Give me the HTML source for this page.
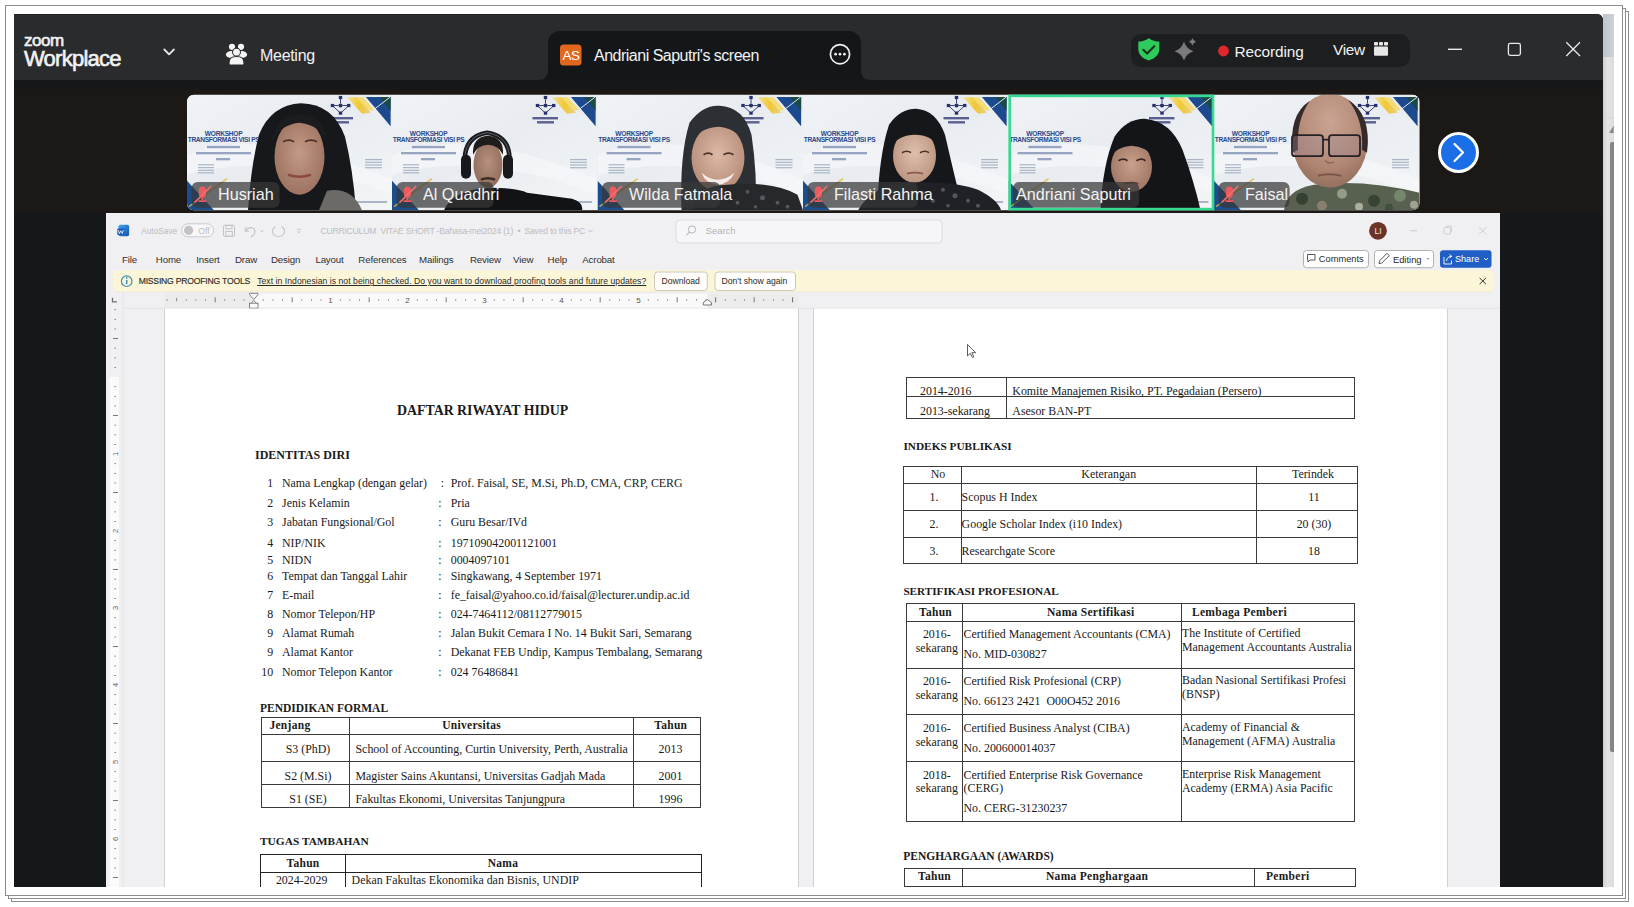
<!DOCTYPE html>
<html><head><meta charset="utf-8">
<style>
*{box-sizing:border-box;margin:0;padding:0}
html,body{width:1634px;height:907px;overflow:hidden;background:#fff;position:relative;font-family:"Liberation Sans",sans-serif}
.a{position:absolute}
.ln{position:absolute;background:#8c8c8c}
.t{position:absolute;white-space:nowrap;line-height:1}
/* title bar */
#zw{left:14px;top:14px;width:1589px;height:873px;background:#14181b;overflow:hidden;border-top-right-radius:6px}
#tb{left:0;top:0;width:1589px;height:66px;background:#2a2b2d}
.wt{color:#f2f2f2}
</style></head>
<body>
<!-- stacked paper borders -->
<div class="a" style="left:11px;top:11px;width:1618px;height:891px;border:1px solid #8c8c8c;background:#fff"></div>
<div class="a" style="left:8px;top:8px;width:1618px;height:891px;border:1px solid #8c8c8c;background:#fff"></div>
<div class="a" style="left:5px;top:5px;width:1618px;height:891px;border:1px solid #8c8c8c;background:#fff"></div>
<!-- right side strip (scrollbar of underlying window) -->
<div class="a" style="left:1603px;top:14px;width:11px;height:873px;background:linear-gradient(90deg,#d0d0d0,#e4e4e4 40%,#dcdcdc)"></div>
<div class="a" style="left:1603px;top:14px;width:11px;height:43px;background:linear-gradient(90deg,#bfc3ca,#cdd2d9)"></div>
<svg class="a" style="left:1603px;top:115px" width="11" height="20"><rect x="0" y="2.5" width="11" height="0.8" fill="#d6d6d6"/><path d="M6 18 L10.7 10.5 L10.7 18Z" fill="#8a8a8a"/></svg>
<div class="a" style="left:1610px;top:142px;width:4px;height:610px;background:#858585;border-radius:2px 0 0 2px"></div>

<!-- zoom window -->
<div class="a" style="left:14px;top:14px;width:1589px;height:873px;background:#14181b;border-top-right-radius:6px;overflow:hidden">
  <div class="a" style="left:0;top:0;width:1589px;height:66px;background:linear-gradient(180deg,#1f2022 0,#1f2022 1px,#2a2b2d 1.5px)"></div>
  <div class="a" style="left:0;top:73px;width:1589px;height:126px;background:linear-gradient(180deg,#14171a 0px,#1b1815 3px,#1b1815)"></div>
</div>
<!-- share tab -->
<div class="a" style="left:548px;top:31px;width:313px;height:49px;background:#14171a;border-radius:12px 12px 0 0"></div>
<svg class="a" style="left:0;top:0" width="1634" height="100" viewBox="0 0 1634 100">
  <path d="M538 80 Q548 80 548 70 L548 80 Z" fill="#14171a"/>
  <path d="M871 80 Q861 80 861 70 L861 80 Z" fill="#14171a"/>
  <!-- chevron -->
  <path d="M164.3 49.5 L169.1 54.3 L173.9 49.5" fill="none" stroke="#e8e8e8" stroke-width="1.8" stroke-linecap="round" stroke-linejoin="round"/>
  <!-- meeting icon -->
  <g fill="#f4f4f4">
    <circle cx="232" cy="46.8" r="3.1"/>
    <circle cx="241" cy="46.8" r="3.1"/>
    <ellipse cx="231.5" cy="54.5" rx="5.6" ry="3.6"/>
    <ellipse cx="241.5" cy="54.5" rx="5.6" ry="3.6"/>
    <circle cx="236.5" cy="52.2" r="4.4" fill="#2a2b2d"/>
    <circle cx="236.5" cy="52.2" r="3.4"/>
    <path d="M229 64 L229 62.5 Q229 56.5 236.5 56.5 Q244 56.5 244 62.5 L244 64 Q244 65 243 65 L230 65 Q229 65 229 64Z" stroke="#2a2b2d" stroke-width="1.2"/>
  </g>
  <!-- AS avatar -->
  <rect x="560" y="44.5" width="21.5" height="21" rx="3.5" fill="#e1661e"/>
  <!-- more circle -->
  <circle cx="840" cy="54.2" r="9.6" fill="none" stroke="#f0f0f0" stroke-width="1.7"/>
  <circle cx="835.6" cy="54.2" r="1.35" fill="#f0f0f0"/><circle cx="840" cy="54.2" r="1.35" fill="#f0f0f0"/><circle cx="844.4" cy="54.2" r="1.35" fill="#f0f0f0"/>
  <!-- pill -->
  <rect x="1131" y="34" width="279" height="33" rx="10" fill="#1d1e20"/>
  <!-- shield -->
  <path d="M1148.8 38.2 C1152 40.6 1155.5 41.6 1159.3 41.6 L1159.3 49 C1159.3 54.6 1155 58.6 1148.8 60.4 C1142.6 58.6 1138.3 54.6 1138.3 49 L1138.3 41.6 C1142.1 41.6 1145.6 40.6 1148.8 38.2Z" fill="#2fca5c"/>
  <path d="M1143.3 49.8 L1147.1 53.5 L1154.3 46.3" fill="none" stroke="#16321f" stroke-width="2.2" stroke-linecap="round" stroke-linejoin="round"/>
  <!-- sparkle -->
  <path d="M1184 41.5 Q1186.2 48.8 1193.5 51.2 Q1186.2 53.6 1184 60.5 Q1181.8 53.6 1174.5 51.2 Q1181.8 48.8 1184 41.5Z" fill="#7a7a7c"/>
  <path d="M1192.5 38 Q1193.3 40.9 1196 41.8 Q1193.3 42.7 1192.5 45.5 Q1191.7 42.7 1189 41.8 Q1191.7 40.9 1192.5 38Z" fill="#7a7a7c"/>
  <!-- rec dot -->
  <circle cx="1223.5" cy="51" r="5.4" fill="#e0282c"/>
  <!-- grid icon -->
  <g fill="#e6e6e6">
   <rect x="1374" y="42" width="4" height="3.6" rx="0.8"/><rect x="1379" y="42" width="4" height="3.6" rx="0.8"/><rect x="1384" y="42" width="4" height="3.6" rx="0.8"/>
   <rect x="1374" y="46.6" width="14" height="9.2" rx="1"/>
  </g>
  <!-- window controls -->
  <path d="M1448 49.3 H1462" stroke="#eaeaea" stroke-width="1.4"/>
  <rect x="1508.4" y="43.4" width="12" height="12" rx="1.8" fill="none" stroke="#eaeaea" stroke-width="1.3"/>
  <path d="M1566.3 42.3 L1580 56 M1580 42.3 L1566.3 56" stroke="#eaeaea" stroke-width="1.3"/>
</svg>
<!--STRIP-->
<svg class="a" style="left:0;top:0" width="1634" height="230" viewBox="0 0 1634 230">
<defs>
<linearGradient id="tbg" x1="0" y1="0" x2="1" y2="1">
 <stop offset="0" stop-color="#f0f3f6"/><stop offset="0.45" stop-color="#e8ecf0"/><stop offset="1" stop-color="#f3f5f7"/>
</linearGradient>
<radialGradient id="skin1" cx="0.5" cy="0.45" r="0.6"><stop offset="0" stop-color="#c39a85"/><stop offset="1" stop-color="#9a6f5e"/></radialGradient>
<radialGradient id="skin2" cx="0.5" cy="0.45" r="0.6"><stop offset="0" stop-color="#b8917e"/><stop offset="1" stop-color="#8d6a59"/></radialGradient>
<radialGradient id="skin3" cx="0.5" cy="0.45" r="0.6"><stop offset="0" stop-color="#dcb9a6"/><stop offset="1" stop-color="#b48a76"/></radialGradient>
<radialGradient id="skin4" cx="0.5" cy="0.45" r="0.6"><stop offset="0" stop-color="#dfc0ad"/><stop offset="1" stop-color="#b8927e"/></radialGradient>
<radialGradient id="skin5" cx="0.5" cy="0.45" r="0.6"><stop offset="0" stop-color="#c9a08b"/><stop offset="1" stop-color="#9c7462"/></radialGradient>
<radialGradient id="skin6" cx="0.5" cy="0.3" r="0.7"><stop offset="0" stop-color="#caa593"/><stop offset="0.7" stop-color="#b08672"/><stop offset="1" stop-color="#94705e"/></radialGradient>
<linearGradient id="ylw" x1="0" y1="0" x2="1" y2="0"><stop offset="0" stop-color="#f3d24a" stop-opacity="0.5"/><stop offset="0.5" stop-color="#f2c830"/><stop offset="1" stop-color="#e9c040" stop-opacity="0.6"/></linearGradient>
<clipPath id="stripclip"><rect x="187" y="94.7" width="1232.5" height="115.5" rx="7"/></clipPath>
<clipPath id="tclip"><rect x="0" y="0" width="205.5" height="115.5"/></clipPath>


</defs>
<rect x="187" y="94.7" width="1232.5" height="115.5" rx="7" fill="#e8ecf0"/>
<g clip-path="url(#stripclip)">
<g transform="translate(187,94.7)" clip-path="url(#tclip)">

 <rect x="0" y="0" width="205.5" height="115.5" fill="url(#tbg)"/>
 <path d="M0 60 Q80 30 205.5 85 L205.5 100 Q90 55 0 80Z" fill="#f5f7f9" opacity="0.7"/>
 <path d="M160 2.5 L170 2.5 L184 18 L175 19Z" fill="url(#ylw)"/>
 <path d="M168 2.5 L176 2.5 L187 15 L182 16Z" fill="#f5d85a" opacity="0.8"/>
 <path d="M178.9 2.2 L203.6 2.2 L203.6 31.6Z" fill="#1d4a8f"/>
 <path d="M192 2.2 L203.6 2.2 L203.6 16Z" fill="#1c4a3c" opacity="0.9"/>
 <path d="M184.6 16.6 L203 2.5" stroke="#dfe8f0" stroke-width="1"/>
 <g fill="#27306e">
  <rect x="151.8" y="1.2" width="3.4" height="3.2"/>
  <rect x="143.8" y="9.2" width="3.4" height="3.2"/><rect x="160" y="9.2" width="3.4" height="3.2"/>
  <rect x="151.8" y="16.8" width="3.4" height="3.2"/>
  <circle cx="153.5" cy="10.8" r="2.1"/>
  <path d="M153.5 4.4 V8.6 M145.5 11 L153.5 18.5 L161.7 11 M147.2 10.8 H151.3 M155.7 10.8 H160" stroke="#27306e" stroke-width="0.9" fill="none"/>
 </g>
 <rect x="140.5" y="22.3" width="25.5" height="2.4" fill="#2a3170" opacity="0.75"/>
 <rect x="145" y="26.4" width="17" height="2.4" fill="#2a3170" opacity="0.75"/>
 <text x="36.7" y="41.2" font-family="Liberation Sans" font-weight="bold" font-size="6.6" fill="#2a4a8a" text-anchor="middle" textLength="37.8">WORKSHOP</text>
 <text x="36.7" y="47.8" font-family="Liberation Sans" font-weight="bold" font-size="6.6" fill="#2a4a8a" text-anchor="middle" textLength="72">TRANSFORMASI VISI PS</text>
 <rect x="20" y="51.2" width="33" height="2.3" fill="#3b5690" opacity="0.5"/>
 <rect x="9" y="57.3" width="55" height="2.3" fill="#3b5690" opacity="0.5"/>
 <rect x="29" y="63.3" width="14" height="2.3" fill="#3b5690" opacity="0.5"/>
 <g fill="#9aa8bb" opacity="0.8">
  <rect x="11" y="69.5" width="16" height="1.2"/><rect x="11" y="72.3" width="16" height="1.2"/><rect x="11" y="75" width="16" height="1.2"/><rect x="11" y="77.5" width="16" height="1.2"/>
  <rect x="178" y="64.3" width="17" height="1.2"/><rect x="178" y="67" width="17" height="1.2"/><rect x="178" y="69.7" width="17" height="1.2"/><rect x="178" y="72.4" width="17" height="1.2"/>
 </g>
 <rect x="158" y="106.3" width="42" height="2" fill="#2a3f6f" opacity="0.35"/>
 <path d="M0 86 L0 115.5 L27 115.5Z" fill="#1c4d8c"/>
 <path d="M2 112 L40 84" stroke="#e0b93a" stroke-width="1.5" opacity="0.8"/>
<path d="M61 115.5 Q64 70 72 40 Q84 10 114 8.5 Q146 9 158 42 Q166 75 169 115.5Z" fill="#17181b"/>
    <ellipse cx="112.5" cy="62" rx="25" ry="38" fill="url(#skin1)"/>
    <path d="M84 50 Q88 20 112 19 Q138 20 141 50 Q134 30 112 28 Q92 30 84 50Z" fill="#1b1c1f"/>
    <path d="M96 47 Q102 44 107 47 M118 47 Q124 44 130 47" stroke="#4a3028" stroke-width="1.8" fill="none"/>
    <path d="M101 80 Q112 84 124 80" stroke="#8a4a42" stroke-width="2.6" fill="none"/>
    <path d="M140 96 Q165 92 175 115.5 L132 115.5Z" fill="#6b6a66"/>
<rect x="4.6" y="87.3" width="88" height="25.7" rx="6" fill="#383838" opacity="0.72"/>
<g transform="translate(11.9,91.6)">
 <path d="M3.5 0.3 Q7 0.3 7 4 L7 8 Q7 11.3 3.5 11.3 Q0 11.3 0 8 L0 4 Q0 0.3 3.5 0.3Z" fill="#ee5a5e"/>
 <path d="M2.5 11 H4.5 V14.2 H2.5Z" fill="#ee5a5e"/>
 <rect x="-0.5" y="14" width="8" height="1.6" rx="0.6" fill="#ee5a5e"/>
 <path d="M-4.3 16.2 L12.3 -0.3" stroke="#f07070" stroke-width="1.6"/></g>
</g>
<g transform="translate(392,94.7)" clip-path="url(#tclip)">

 <rect x="0" y="0" width="205.5" height="115.5" fill="url(#tbg)"/>
 <path d="M0 60 Q80 30 205.5 85 L205.5 100 Q90 55 0 80Z" fill="#f5f7f9" opacity="0.7"/>
 <path d="M160 2.5 L170 2.5 L184 18 L175 19Z" fill="url(#ylw)"/>
 <path d="M168 2.5 L176 2.5 L187 15 L182 16Z" fill="#f5d85a" opacity="0.8"/>
 <path d="M178.9 2.2 L203.6 2.2 L203.6 31.6Z" fill="#1d4a8f"/>
 <path d="M192 2.2 L203.6 2.2 L203.6 16Z" fill="#1c4a3c" opacity="0.9"/>
 <path d="M184.6 16.6 L203 2.5" stroke="#dfe8f0" stroke-width="1"/>
 <g fill="#27306e">
  <rect x="151.8" y="1.2" width="3.4" height="3.2"/>
  <rect x="143.8" y="9.2" width="3.4" height="3.2"/><rect x="160" y="9.2" width="3.4" height="3.2"/>
  <rect x="151.8" y="16.8" width="3.4" height="3.2"/>
  <circle cx="153.5" cy="10.8" r="2.1"/>
  <path d="M153.5 4.4 V8.6 M145.5 11 L153.5 18.5 L161.7 11 M147.2 10.8 H151.3 M155.7 10.8 H160" stroke="#27306e" stroke-width="0.9" fill="none"/>
 </g>
 <rect x="140.5" y="22.3" width="25.5" height="2.4" fill="#2a3170" opacity="0.75"/>
 <rect x="145" y="26.4" width="17" height="2.4" fill="#2a3170" opacity="0.75"/>
 <text x="36.7" y="41.2" font-family="Liberation Sans" font-weight="bold" font-size="6.6" fill="#2a4a8a" text-anchor="middle" textLength="37.8">WORKSHOP</text>
 <text x="36.7" y="47.8" font-family="Liberation Sans" font-weight="bold" font-size="6.6" fill="#2a4a8a" text-anchor="middle" textLength="72">TRANSFORMASI VISI PS</text>
 <rect x="20" y="51.2" width="33" height="2.3" fill="#3b5690" opacity="0.5"/>
 <rect x="9" y="57.3" width="55" height="2.3" fill="#3b5690" opacity="0.5"/>
 <rect x="29" y="63.3" width="14" height="2.3" fill="#3b5690" opacity="0.5"/>
 <g fill="#9aa8bb" opacity="0.8">
  <rect x="11" y="69.5" width="16" height="1.2"/><rect x="11" y="72.3" width="16" height="1.2"/><rect x="11" y="75" width="16" height="1.2"/><rect x="11" y="77.5" width="16" height="1.2"/>
  <rect x="178" y="64.3" width="17" height="1.2"/><rect x="178" y="67" width="17" height="1.2"/><rect x="178" y="69.7" width="17" height="1.2"/><rect x="178" y="72.4" width="17" height="1.2"/>
 </g>
 <rect x="158" y="106.3" width="42" height="2" fill="#2a3f6f" opacity="0.35"/>
 <path d="M0 86 L0 115.5 L27 115.5Z" fill="#1c4d8c"/>
 <path d="M2 112 L40 84" stroke="#e0b93a" stroke-width="1.5" opacity="0.8"/>
<path d="M52 115.5 Q60 96 95 93 Q125 93 135 98 L180 104 Q192 108 190 115.5Z" fill="#121316"/>
    <ellipse cx="96" cy="70" rx="14.5" ry="23" fill="url(#skin2)"/>
    <path d="M81 60 Q80 42 96 41 Q112 42 111 60 Q106 50 96 50 Q86 50 81 60Z" fill="#1f1c1b"/>
    <path d="M73 72 Q70 42 95 38 Q121 42 117 72" fill="none" stroke="#1a1b1f" stroke-width="4.5"/>
    <path d="M73 72 Q70 42 95 38 Q121 42 117 72" fill="none" stroke="#8a8c92" stroke-width="1" opacity="0.6"/>
    <rect x="69" y="60" width="10" height="24" rx="5" fill="#18191d"/>
    <rect x="111" y="60" width="10" height="24" rx="5" fill="#18191d"/>
    <path d="M89 85 Q96 82 103 85" stroke="#3a2b24" stroke-width="2.4" fill="none"/>
<rect x="4.6" y="87.3" width="97" height="25.7" rx="6" fill="#383838" opacity="0.72"/>
<g transform="translate(11.9,91.6)">
 <path d="M3.5 0.3 Q7 0.3 7 4 L7 8 Q7 11.3 3.5 11.3 Q0 11.3 0 8 L0 4 Q0 0.3 3.5 0.3Z" fill="#ee5a5e"/>
 <path d="M2.5 11 H4.5 V14.2 H2.5Z" fill="#ee5a5e"/>
 <rect x="-0.5" y="14" width="8" height="1.6" rx="0.6" fill="#ee5a5e"/>
 <path d="M-4.3 16.2 L12.3 -0.3" stroke="#f07070" stroke-width="1.6"/></g>
</g>
<g transform="translate(597.5,94.7)" clip-path="url(#tclip)">

 <rect x="0" y="0" width="205.5" height="115.5" fill="url(#tbg)"/>
 <path d="M0 60 Q80 30 205.5 85 L205.5 100 Q90 55 0 80Z" fill="#f5f7f9" opacity="0.7"/>
 <path d="M160 2.5 L170 2.5 L184 18 L175 19Z" fill="url(#ylw)"/>
 <path d="M168 2.5 L176 2.5 L187 15 L182 16Z" fill="#f5d85a" opacity="0.8"/>
 <path d="M178.9 2.2 L203.6 2.2 L203.6 31.6Z" fill="#1d4a8f"/>
 <path d="M192 2.2 L203.6 2.2 L203.6 16Z" fill="#1c4a3c" opacity="0.9"/>
 <path d="M184.6 16.6 L203 2.5" stroke="#dfe8f0" stroke-width="1"/>
 <g fill="#27306e">
  <rect x="151.8" y="1.2" width="3.4" height="3.2"/>
  <rect x="143.8" y="9.2" width="3.4" height="3.2"/><rect x="160" y="9.2" width="3.4" height="3.2"/>
  <rect x="151.8" y="16.8" width="3.4" height="3.2"/>
  <circle cx="153.5" cy="10.8" r="2.1"/>
  <path d="M153.5 4.4 V8.6 M145.5 11 L153.5 18.5 L161.7 11 M147.2 10.8 H151.3 M155.7 10.8 H160" stroke="#27306e" stroke-width="0.9" fill="none"/>
 </g>
 <rect x="140.5" y="22.3" width="25.5" height="2.4" fill="#2a3170" opacity="0.75"/>
 <rect x="145" y="26.4" width="17" height="2.4" fill="#2a3170" opacity="0.75"/>
 <text x="36.7" y="41.2" font-family="Liberation Sans" font-weight="bold" font-size="6.6" fill="#2a4a8a" text-anchor="middle" textLength="37.8">WORKSHOP</text>
 <text x="36.7" y="47.8" font-family="Liberation Sans" font-weight="bold" font-size="6.6" fill="#2a4a8a" text-anchor="middle" textLength="72">TRANSFORMASI VISI PS</text>
 <rect x="20" y="51.2" width="33" height="2.3" fill="#3b5690" opacity="0.5"/>
 <rect x="9" y="57.3" width="55" height="2.3" fill="#3b5690" opacity="0.5"/>
 <rect x="29" y="63.3" width="14" height="2.3" fill="#3b5690" opacity="0.5"/>
 <g fill="#9aa8bb" opacity="0.8">
  <rect x="11" y="69.5" width="16" height="1.2"/><rect x="11" y="72.3" width="16" height="1.2"/><rect x="11" y="75" width="16" height="1.2"/><rect x="11" y="77.5" width="16" height="1.2"/>
  <rect x="178" y="64.3" width="17" height="1.2"/><rect x="178" y="67" width="17" height="1.2"/><rect x="178" y="69.7" width="17" height="1.2"/><rect x="178" y="72.4" width="17" height="1.2"/>
 </g>
 <rect x="158" y="106.3" width="42" height="2" fill="#2a3f6f" opacity="0.35"/>
 <path d="M0 86 L0 115.5 L27 115.5Z" fill="#1c4d8c"/>
 <path d="M2 112 L40 84" stroke="#e0b93a" stroke-width="1.5" opacity="0.8"/>
<path d="M84 115.5 Q82 60 92 28 Q105 10 122 11 Q146 12 154 40 Q160 80 158 115.5Z" fill="#2c2f34"/>
    <ellipse cx="120.5" cy="63" rx="26.5" ry="34" fill="url(#skin3)"/>
    <path d="M94 46 Q98 24 121 24 Q143 25 147 48 Q138 33 121 32 Q103 33 94 46Z" fill="#2c2f34"/>
    <path d="M104 78 Q120 92 137 78 Q132 89 120 90 Q108 89 104 78Z" fill="#f4ece8"/>
    <path d="M106 60 Q111 57 115 60 M126 60 Q131 57 136 60" stroke="#4a3028" stroke-width="1.8" fill="none"/>
    <path d="M95 115.5 Q100 90 130 90 Q175 86 200 100 L205.5 115.5Z" fill="#26282c"/>
    <g fill="#7a7c80" opacity="0.55"><circle cx="150" cy="97" r="2"/><circle cx="165" cy="103" r="2.5"/><circle cx="180" cy="108" r="2"/><circle cx="140" cy="108" r="2"/><circle cx="158" cy="112" r="1.8"/><circle cx="190" cy="112" r="2"/></g>
<rect x="4.6" y="87.3" width="118" height="25.7" rx="6" fill="#383838" opacity="0.72"/>
<g transform="translate(11.9,91.6)">
 <path d="M3.5 0.3 Q7 0.3 7 4 L7 8 Q7 11.3 3.5 11.3 Q0 11.3 0 8 L0 4 Q0 0.3 3.5 0.3Z" fill="#ee5a5e"/>
 <path d="M2.5 11 H4.5 V14.2 H2.5Z" fill="#ee5a5e"/>
 <rect x="-0.5" y="14" width="8" height="1.6" rx="0.6" fill="#ee5a5e"/>
 <path d="M-4.3 16.2 L12.3 -0.3" stroke="#f07070" stroke-width="1.6"/></g>
</g>
<g transform="translate(803,94.7)" clip-path="url(#tclip)">

 <rect x="0" y="0" width="205.5" height="115.5" fill="url(#tbg)"/>
 <path d="M0 60 Q80 30 205.5 85 L205.5 100 Q90 55 0 80Z" fill="#f5f7f9" opacity="0.7"/>
 <path d="M160 2.5 L170 2.5 L184 18 L175 19Z" fill="url(#ylw)"/>
 <path d="M168 2.5 L176 2.5 L187 15 L182 16Z" fill="#f5d85a" opacity="0.8"/>
 <path d="M178.9 2.2 L203.6 2.2 L203.6 31.6Z" fill="#1d4a8f"/>
 <path d="M192 2.2 L203.6 2.2 L203.6 16Z" fill="#1c4a3c" opacity="0.9"/>
 <path d="M184.6 16.6 L203 2.5" stroke="#dfe8f0" stroke-width="1"/>
 <g fill="#27306e">
  <rect x="151.8" y="1.2" width="3.4" height="3.2"/>
  <rect x="143.8" y="9.2" width="3.4" height="3.2"/><rect x="160" y="9.2" width="3.4" height="3.2"/>
  <rect x="151.8" y="16.8" width="3.4" height="3.2"/>
  <circle cx="153.5" cy="10.8" r="2.1"/>
  <path d="M153.5 4.4 V8.6 M145.5 11 L153.5 18.5 L161.7 11 M147.2 10.8 H151.3 M155.7 10.8 H160" stroke="#27306e" stroke-width="0.9" fill="none"/>
 </g>
 <rect x="140.5" y="22.3" width="25.5" height="2.4" fill="#2a3170" opacity="0.75"/>
 <rect x="145" y="26.4" width="17" height="2.4" fill="#2a3170" opacity="0.75"/>
 <text x="36.7" y="41.2" font-family="Liberation Sans" font-weight="bold" font-size="6.6" fill="#2a4a8a" text-anchor="middle" textLength="37.8">WORKSHOP</text>
 <text x="36.7" y="47.8" font-family="Liberation Sans" font-weight="bold" font-size="6.6" fill="#2a4a8a" text-anchor="middle" textLength="72">TRANSFORMASI VISI PS</text>
 <rect x="20" y="51.2" width="33" height="2.3" fill="#3b5690" opacity="0.5"/>
 <rect x="9" y="57.3" width="55" height="2.3" fill="#3b5690" opacity="0.5"/>
 <rect x="29" y="63.3" width="14" height="2.3" fill="#3b5690" opacity="0.5"/>
 <g fill="#9aa8bb" opacity="0.8">
  <rect x="11" y="69.5" width="16" height="1.2"/><rect x="11" y="72.3" width="16" height="1.2"/><rect x="11" y="75" width="16" height="1.2"/><rect x="11" y="77.5" width="16" height="1.2"/>
  <rect x="178" y="64.3" width="17" height="1.2"/><rect x="178" y="67" width="17" height="1.2"/><rect x="178" y="69.7" width="17" height="1.2"/><rect x="178" y="72.4" width="17" height="1.2"/>
 </g>
 <rect x="158" y="106.3" width="42" height="2" fill="#2a3f6f" opacity="0.35"/>
 <path d="M0 86 L0 115.5 L27 115.5Z" fill="#1c4d8c"/>
 <path d="M2 112 L40 84" stroke="#e0b93a" stroke-width="1.5" opacity="0.8"/>
<path d="M74 115.5 Q76 60 86 30 Q97 14 113 14 Q133 15 142 40 Q150 75 160 115.5Z" fill="#16171b"/>
    <ellipse cx="111.5" cy="61" rx="21.5" ry="27" fill="url(#skin4)"/>
    <path d="M88 52 Q90 33 112 33 Q134 34 136 52 Q128 40 112 40 Q96 40 88 52Z" fill="#16171b"/>
    <path d="M99 58 Q104 55 108 58 M117 58 Q122 55 126 58" stroke="#4a3028" stroke-width="1.6" fill="none"/>
    <path d="M104 79 Q112 77 120 79" stroke="#8e5a50" stroke-width="1.8" fill="none"/>
    <path d="M55 115.5 Q70 90 105 88 Q150 86 175 95 Q195 105 198 115.5Z" fill="#1f2126"/>
    <g fill="#8a8c90" opacity="0.5"><circle cx="140" cy="95" r="2"/><circle cx="152" cy="101" r="2.5"/><circle cx="165" cy="106" r="2"/><circle cx="130" cy="106" r="2"/><circle cx="145" cy="111" r="1.8"/><circle cx="175" cy="111" r="2"/><circle cx="120" cy="98" r="1.6"/></g>
<rect x="4.6" y="87.3" width="110" height="25.7" rx="6" fill="#383838" opacity="0.72"/>
<g transform="translate(11.9,91.6)">
 <path d="M3.5 0.3 Q7 0.3 7 4 L7 8 Q7 11.3 3.5 11.3 Q0 11.3 0 8 L0 4 Q0 0.3 3.5 0.3Z" fill="#ee5a5e"/>
 <path d="M2.5 11 H4.5 V14.2 H2.5Z" fill="#ee5a5e"/>
 <rect x="-0.5" y="14" width="8" height="1.6" rx="0.6" fill="#ee5a5e"/>
 <path d="M-4.3 16.2 L12.3 -0.3" stroke="#f07070" stroke-width="1.6"/></g>
</g>
<g transform="translate(1008.5,94.7)" clip-path="url(#tclip)">

 <rect x="0" y="0" width="205.5" height="115.5" fill="url(#tbg)"/>
 <path d="M0 60 Q80 30 205.5 85 L205.5 100 Q90 55 0 80Z" fill="#f5f7f9" opacity="0.7"/>
 <path d="M160 2.5 L170 2.5 L184 18 L175 19Z" fill="url(#ylw)"/>
 <path d="M168 2.5 L176 2.5 L187 15 L182 16Z" fill="#f5d85a" opacity="0.8"/>
 <path d="M178.9 2.2 L203.6 2.2 L203.6 31.6Z" fill="#1d4a8f"/>
 <path d="M192 2.2 L203.6 2.2 L203.6 16Z" fill="#1c4a3c" opacity="0.9"/>
 <path d="M184.6 16.6 L203 2.5" stroke="#dfe8f0" stroke-width="1"/>
 <g fill="#27306e">
  <rect x="151.8" y="1.2" width="3.4" height="3.2"/>
  <rect x="143.8" y="9.2" width="3.4" height="3.2"/><rect x="160" y="9.2" width="3.4" height="3.2"/>
  <rect x="151.8" y="16.8" width="3.4" height="3.2"/>
  <circle cx="153.5" cy="10.8" r="2.1"/>
  <path d="M153.5 4.4 V8.6 M145.5 11 L153.5 18.5 L161.7 11 M147.2 10.8 H151.3 M155.7 10.8 H160" stroke="#27306e" stroke-width="0.9" fill="none"/>
 </g>
 <rect x="140.5" y="22.3" width="25.5" height="2.4" fill="#2a3170" opacity="0.75"/>
 <rect x="145" y="26.4" width="17" height="2.4" fill="#2a3170" opacity="0.75"/>
 <text x="36.7" y="41.2" font-family="Liberation Sans" font-weight="bold" font-size="6.6" fill="#2a4a8a" text-anchor="middle" textLength="37.8">WORKSHOP</text>
 <text x="36.7" y="47.8" font-family="Liberation Sans" font-weight="bold" font-size="6.6" fill="#2a4a8a" text-anchor="middle" textLength="72">TRANSFORMASI VISI PS</text>
 <rect x="20" y="51.2" width="33" height="2.3" fill="#3b5690" opacity="0.5"/>
 <rect x="9" y="57.3" width="55" height="2.3" fill="#3b5690" opacity="0.5"/>
 <rect x="29" y="63.3" width="14" height="2.3" fill="#3b5690" opacity="0.5"/>
 <g fill="#9aa8bb" opacity="0.8">
  <rect x="11" y="69.5" width="16" height="1.2"/><rect x="11" y="72.3" width="16" height="1.2"/><rect x="11" y="75" width="16" height="1.2"/><rect x="11" y="77.5" width="16" height="1.2"/>
  <rect x="178" y="64.3" width="17" height="1.2"/><rect x="178" y="67" width="17" height="1.2"/><rect x="178" y="69.7" width="17" height="1.2"/><rect x="178" y="72.4" width="17" height="1.2"/>
 </g>
 <rect x="158" y="106.3" width="42" height="2" fill="#2a3f6f" opacity="0.35"/>
 <path d="M0 86 L0 115.5 L27 115.5Z" fill="#1c4d8c"/>
 <path d="M2 112 L40 84" stroke="#e0b93a" stroke-width="1.5" opacity="0.8"/>
<path d="M92 115.5 Q94 70 106 42 Q118 24 136 24 Q162 26 174 55 Q186 88 192 115.5Z" fill="#141519"/>
    <ellipse cx="123" cy="72" rx="20.5" ry="25" fill="url(#skin5)"/>
    <path d="M101 62 Q104 44 123 43 Q143 44 146 62 Q137 52 123 51 Q109 52 101 62Z" fill="#141519"/>
    <path d="M110 66 Q115 63 119 66 M128 66 Q133 63 137 66" stroke="#3a2420" stroke-width="1.8" fill="none"/>
    <path d="M116 89 Q123 87 130 89" stroke="#6e4a40" stroke-width="1.8" fill="none"/>
<rect x="4.6" y="87.3" width="126" height="25.7" rx="6" fill="#383838" opacity="0.72"/>
</g>
<g transform="translate(1214,94.7)" clip-path="url(#tclip)">

 <rect x="0" y="0" width="205.5" height="115.5" fill="url(#tbg)"/>
 <path d="M0 60 Q80 30 205.5 85 L205.5 100 Q90 55 0 80Z" fill="#f5f7f9" opacity="0.7"/>
 <path d="M160 2.5 L170 2.5 L184 18 L175 19Z" fill="url(#ylw)"/>
 <path d="M168 2.5 L176 2.5 L187 15 L182 16Z" fill="#f5d85a" opacity="0.8"/>
 <path d="M178.9 2.2 L203.6 2.2 L203.6 31.6Z" fill="#1d4a8f"/>
 <path d="M192 2.2 L203.6 2.2 L203.6 16Z" fill="#1c4a3c" opacity="0.9"/>
 <path d="M184.6 16.6 L203 2.5" stroke="#dfe8f0" stroke-width="1"/>
 <g fill="#27306e">
  <rect x="151.8" y="1.2" width="3.4" height="3.2"/>
  <rect x="143.8" y="9.2" width="3.4" height="3.2"/><rect x="160" y="9.2" width="3.4" height="3.2"/>
  <rect x="151.8" y="16.8" width="3.4" height="3.2"/>
  <circle cx="153.5" cy="10.8" r="2.1"/>
  <path d="M153.5 4.4 V8.6 M145.5 11 L153.5 18.5 L161.7 11 M147.2 10.8 H151.3 M155.7 10.8 H160" stroke="#27306e" stroke-width="0.9" fill="none"/>
 </g>
 <rect x="140.5" y="22.3" width="25.5" height="2.4" fill="#2a3170" opacity="0.75"/>
 <rect x="145" y="26.4" width="17" height="2.4" fill="#2a3170" opacity="0.75"/>
 <text x="36.7" y="41.2" font-family="Liberation Sans" font-weight="bold" font-size="6.6" fill="#2a4a8a" text-anchor="middle" textLength="37.8">WORKSHOP</text>
 <text x="36.7" y="47.8" font-family="Liberation Sans" font-weight="bold" font-size="6.6" fill="#2a4a8a" text-anchor="middle" textLength="72">TRANSFORMASI VISI PS</text>
 <rect x="20" y="51.2" width="33" height="2.3" fill="#3b5690" opacity="0.5"/>
 <rect x="9" y="57.3" width="55" height="2.3" fill="#3b5690" opacity="0.5"/>
 <rect x="29" y="63.3" width="14" height="2.3" fill="#3b5690" opacity="0.5"/>
 <g fill="#9aa8bb" opacity="0.8">
  <rect x="11" y="69.5" width="16" height="1.2"/><rect x="11" y="72.3" width="16" height="1.2"/><rect x="11" y="75" width="16" height="1.2"/><rect x="11" y="77.5" width="16" height="1.2"/>
  <rect x="178" y="64.3" width="17" height="1.2"/><rect x="178" y="67" width="17" height="1.2"/><rect x="178" y="69.7" width="17" height="1.2"/><rect x="178" y="72.4" width="17" height="1.2"/>
 </g>
 <rect x="158" y="106.3" width="42" height="2" fill="#2a3f6f" opacity="0.35"/>
 <path d="M0 86 L0 115.5 L27 115.5Z" fill="#1c4d8c"/>
 <path d="M2 112 L40 84" stroke="#e0b93a" stroke-width="1.5" opacity="0.8"/>
<path d="M70 115.5 Q72 95 100 90 Q150 84 205.5 98 L205.5 115.5Z" fill="#59604f"/>
    <g opacity="0.75"><circle cx="88" cy="104" r="6" fill="#2a3428"/><circle cx="128" cy="99" r="5" fill="#a8ae98"/><circle cx="160" cy="106" r="6" fill="#2c3a2c"/><circle cx="186" cy="101" r="6" fill="#7f9474"/><circle cx="108" cy="111" r="5" fill="#9a8a7a"/><circle cx="145" cy="112" r="4" fill="#c8c8b8"/><circle cx="175" cy="113" r="4" fill="#3a4a38"/><circle cx="200" cy="110" r="4" fill="#b8b8a8"/></g>
    <ellipse cx="116" cy="46" rx="37.5" ry="47" fill="url(#skin6)"/>
    <path d="M79 58 Q74 20 96 6 Q82 25 84 55Z" fill="#35292a"/>
    <path d="M153 58 Q158 20 134 5 Q150 25 148 55Z" fill="#35292a"/>
    <rect x="78" y="40.5" width="31" height="21" rx="3" fill="#9e8a98" fill-opacity="0.35" stroke="#262226" stroke-width="1.8"/>
    <rect x="115" y="40.5" width="31" height="21" rx="3" fill="#9e8a98" fill-opacity="0.35" stroke="#262226" stroke-width="1.8"/>
    <path d="M109 45 H115" stroke="#262226" stroke-width="1.8"/>
    <path d="M104 81 Q115 78 127 81" stroke="#7a5448" stroke-width="2" fill="none"/>
    <path d="M111 66 Q115 70 120 67" stroke="#8a6452" stroke-width="1.3" fill="none"/>
<rect x="4.6" y="87.3" width="71" height="25.7" rx="6" fill="#383838" opacity="0.72"/>
<g transform="translate(11.9,91.6)">
 <path d="M3.5 0.3 Q7 0.3 7 4 L7 8 Q7 11.3 3.5 11.3 Q0 11.3 0 8 L0 4 Q0 0.3 3.5 0.3Z" fill="#ee5a5e"/>
 <path d="M2.5 11 H4.5 V14.2 H2.5Z" fill="#ee5a5e"/>
 <rect x="-0.5" y="14" width="8" height="1.6" rx="0.6" fill="#ee5a5e"/>
 <path d="M-4.3 16.2 L12.3 -0.3" stroke="#f07070" stroke-width="1.6"/></g>
</g>
</g>
<rect x="1009.7" y="95.9" width="203.3" height="113.2" fill="none" stroke="#35d98f" stroke-width="2.6"/>
<circle cx="1458.5" cy="152.5" r="19" fill="#1a6ee8" stroke="#fff" stroke-width="3"/>
<path d="M1454.5 144 L1463 152.5 L1454.5 161" fill="none" stroke="#fff" stroke-width="2.2" stroke-linecap="round" stroke-linejoin="round"/>
</svg>
<div class="t" style="left:217.5px;top:186.4px;font-size:17px;color:#f4f4f4;transform:scaleX(0.95);transform-origin:0 0">Husriah</div>
<div class="t" style="left:422.5px;top:186.4px;font-size:17px;color:#f4f4f4;transform:scaleX(0.95);transform-origin:0 0">Al Quadhri</div>
<div class="t" style="left:628.5px;top:186.4px;font-size:17px;color:#f4f4f4;transform:scaleX(0.95);transform-origin:0 0">Wilda Fatmala</div>
<div class="t" style="left:833.8px;top:186.4px;font-size:17px;color:#f4f4f4;transform:scaleX(0.95);transform-origin:0 0">Filasti Rahma</div>
<div class="t" style="left:1016.3px;top:186.4px;font-size:17px;color:#f4f4f4;transform:scaleX(0.95);transform-origin:0 0">Andriani Saputri</div>
<div class="t" style="left:1245.2px;top:186.4px;font-size:17px;color:#f4f4f4;transform:scaleX(0.95);transform-origin:0 0">Faisal</div>
<!--/STRIP-->
<div class="t wt" style="left:24px;top:31.5px;font-size:17px;letter-spacing:-0.5px;-webkit-text-stroke:0.6px #f2f2f2">zoom</div>
<div class="t wt" style="left:24px;top:47.5px;font-size:22px;letter-spacing:-0.75px;-webkit-text-stroke:0.6px #f2f2f2">Workplace</div>
<div class="t wt" style="left:260px;top:47.5px;font-size:16px;letter-spacing:-0.3px">Meeting</div>
<div class="t" style="left:562.5px;top:48.5px;font-size:13.5px;color:#fff;letter-spacing:-0.4px">AS</div>
<div class="t wt" style="left:594px;top:47.5px;font-size:16px;letter-spacing:-0.5px">Andriani Saputri's screen</div>
<div class="t wt" style="left:1234.5px;top:43.5px;font-size:15.4px;letter-spacing:-0.1px">Recording</div>
<div class="t wt" style="left:1333px;top:41.5px;font-size:15.4px;letter-spacing:-0.3px">View</div>
<!--WORD-->
<div class="a" style="left:106px;top:213px;width:1394px;height:674px;background:#f0eff2"></div>
<svg class="a" style="left:0;top:0" width="1634" height="907" viewBox="0 0 1634 907">
<defs><linearGradient id="wg" x1="0" y1="0" x2="1" y2="1"><stop offset="0" stop-color="#41a5ee"/><stop offset="0.5" stop-color="#2b7cd3"/><stop offset="1" stop-color="#1651a8"/></linearGradient></defs>
<rect x="118.5" y="224.7" width="10.6" height="11.5" rx="1.6" fill="url(#wg)"/>
<rect x="117.3" y="228.5" width="7" height="6.5" rx="1" fill="#185abd"/>
<path d="M118.3 230 L119.3 233.6 L120.8 230.8 L122.3 233.6 L123.3 230" fill="none" stroke="#fff" stroke-width="0.8"/>
<rect x="181.6" y="223.8" width="32" height="13" rx="6.5" fill="#f7f7f8" stroke="#c9c9cb" stroke-width="1"/>
<circle cx="188.6" cy="230.3" r="4.6" fill="#c2c2c4"/>
<g fill="none" stroke="#c4c4c6" stroke-width="1"><rect x="223.5" y="225.3" width="11" height="11" rx="1"/><rect x="226" y="225.3" width="6" height="3.5"/><rect x="225.8" y="231.5" width="6.5" height="4.8"/></g>
<path d="M246 227 L245 231 L249 231.5 M245.5 230.8 Q249 226.5 253 228 Q257 231 253 235.5 L251 237" fill="none" stroke="#c4c4c6" stroke-width="1.1"/>
<path d="M260.5 230.5 L262 232 L263.5 230.5" fill="none" stroke="#c4c4c6" stroke-width="0.9"/>
<path d="M275.5 226.5 Q272 229 272.5 232 Q273.5 236.5 278.5 236.5 Q283.5 236.5 284.5 232 Q285 228.5 281.5 226.5" fill="none" stroke="#c4c4c6" stroke-width="1.1"/>
<path d="M296.8 229.3 H301 M297.3 231 L298.9 233 L300.5 231" fill="none" stroke="#c4c4c6" stroke-width="0.9"/>
<path d="M588.3 229.8 L590.5 232 L592.7 229.8" fill="none" stroke="#bdbdbf" stroke-width="0.9"/>
<rect x="676" y="220" width="266" height="23" rx="4" fill="#f6f6f8" stroke="#dcdcde" stroke-width="1"/>
<circle cx="692" cy="229.5" r="3.6" fill="none" stroke="#b5b5b7" stroke-width="1"/><path d="M689.4 232.2 L686.5 235.2" stroke="#b5b5b7" stroke-width="1.1"/>
<circle cx="1378" cy="230.8" r="8.9" fill="#6b3426"/>
<path d="M1410 230.7 H1417" stroke="#c9c9cb" stroke-width="0.9"/>
<rect x="1444" y="227.5" width="6.5" height="6.5" rx="1" fill="none" stroke="#c9c9cb" stroke-width="0.9"/><path d="M1446 226 H1451.5 V231.5" fill="none" stroke="#c9c9cb" stroke-width="0.8"/>
<path d="M1479 227 L1486.5 234.5 M1486.5 227 L1479 234.5" stroke="#c9c9cb" stroke-width="0.9"/>
<rect x="1303.5" y="250.5" width="65" height="17.2" rx="3" fill="#fff" stroke="#a8a8aa" stroke-width="0.9"/>
<path d="M1307.5 254.5 H1315 V260 H1310 L1308 262 V260 H1307.5Z" fill="none" stroke="#444" stroke-width="0.9"/>
<rect x="1374.5" y="250.5" width="59" height="17.2" rx="3" fill="#fff" stroke="#a8a8aa" stroke-width="0.9"/>
<path d="M1379 263.5 L1379.6 260.8 L1387 253.3 L1389.3 255.6 L1381.8 263 Z" fill="none" stroke="#444" stroke-width="0.9"/>
<path d="M1426.8 258.2 L1427.8 259.2 L1428.8 258.2" fill="none" stroke="#555" stroke-width="0.8"/>
<rect x="1440" y="250.3" width="51.5" height="17.5" rx="3" fill="#1f5ec4"/>
<path d="M1444 257 V264 H1451.5 V260.5 M1446.5 261 Q1447 256.5 1451.5 256.3 M1449.5 254.5 L1451.8 256.3 L1449.5 258" fill="none" stroke="#fff" stroke-width="0.9"/>
<path d="M1484 258 L1486 260 L1488 258" fill="none" stroke="#fff" stroke-width="0.9"/>
<rect x="112.5" y="271.2" width="1381.5" height="21.5" rx="5" fill="#e9e6da" opacity="0.8"/>
<rect x="112.5" y="270.2" width="1381.5" height="21.3" rx="4.5" fill="#fcf6d8"/>
<circle cx="126.7" cy="281.2" r="5.3" fill="none" stroke="#3f8fb0" stroke-width="1.2"/><path d="M126.7 279.9 V284.2" stroke="#3f8fb0" stroke-width="1.5"/><circle cx="126.7" cy="277.9" r="0.85" fill="#3f8fb0"/>
<rect x="654.5" y="272" width="52.8" height="18.5" rx="3" fill="#fffefa" stroke="#c5c2b5" stroke-width="0.9"/>
<rect x="715" y="272" width="80.5" height="18.5" rx="3" fill="#fffefa" stroke="#c5c2b5" stroke-width="0.9"/>
<path d="M1479.6 277.9 L1486 284.2 M1486 277.9 L1479.6 284.2" stroke="#333" stroke-width="1"/>
<rect x="123.5" y="292.5" width="1376.5" height="16" fill="#f0eff2"/>
<rect x="164.5" y="293.5" width="634" height="14.3" fill="#ececed"/>
<rect x="254" y="293.5" width="453.5" height="14.3" fill="#f9f9f9"/>
<rect x="123.5" y="307.8" width="1376.5" height="0.8" fill="#dedede"/>
<rect x="166.6" y="299.3" width="0.9" height="1.3" fill="#6a6a6a"/>
<rect x="176.1" y="297.8" width="1" height="3.5" fill="#8a8a8a"/>
<rect x="185.8" y="299.3" width="0.9" height="1.3" fill="#6a6a6a"/>
<rect x="195.4" y="299.3" width="0.9" height="1.3" fill="#6a6a6a"/>
<rect x="205.1" y="299.3" width="0.9" height="1.3" fill="#6a6a6a"/>
<rect x="214.7" y="297.3" width="0.9" height="5" fill="#6a6a6a"/>
<rect x="224.3" y="299.3" width="0.9" height="1.3" fill="#6a6a6a"/>
<rect x="233.9" y="299.3" width="0.9" height="1.3" fill="#6a6a6a"/>
<rect x="243.6" y="299.3" width="0.9" height="1.3" fill="#6a6a6a"/>
<rect x="262.8" y="299.3" width="0.9" height="1.3" fill="#6a6a6a"/>
<rect x="272.5" y="299.3" width="0.9" height="1.3" fill="#6a6a6a"/>
<rect x="282.1" y="299.3" width="0.9" height="1.3" fill="#6a6a6a"/>
<rect x="291.7" y="297.3" width="0.9" height="5" fill="#6a6a6a"/>
<rect x="301.3" y="299.3" width="0.9" height="1.3" fill="#6a6a6a"/>
<rect x="311.0" y="299.3" width="0.9" height="1.3" fill="#6a6a6a"/>
<rect x="320.6" y="299.3" width="0.9" height="1.3" fill="#6a6a6a"/>
<text x="330.6" y="303.2" font-family="Liberation Sans" font-size="8" fill="#555" text-anchor="middle">1</text>
<rect x="339.8" y="299.3" width="0.9" height="1.3" fill="#6a6a6a"/>
<rect x="349.5" y="299.3" width="0.9" height="1.3" fill="#6a6a6a"/>
<rect x="359.1" y="299.3" width="0.9" height="1.3" fill="#6a6a6a"/>
<rect x="368.7" y="297.3" width="0.9" height="5" fill="#6a6a6a"/>
<rect x="378.3" y="299.3" width="0.9" height="1.3" fill="#6a6a6a"/>
<rect x="388.0" y="299.3" width="0.9" height="1.3" fill="#6a6a6a"/>
<rect x="397.6" y="299.3" width="0.9" height="1.3" fill="#6a6a6a"/>
<text x="407.6" y="303.2" font-family="Liberation Sans" font-size="8" fill="#555" text-anchor="middle">2</text>
<rect x="416.8" y="299.3" width="0.9" height="1.3" fill="#6a6a6a"/>
<rect x="426.5" y="299.3" width="0.9" height="1.3" fill="#6a6a6a"/>
<rect x="436.1" y="299.3" width="0.9" height="1.3" fill="#6a6a6a"/>
<rect x="445.7" y="297.3" width="0.9" height="5" fill="#6a6a6a"/>
<rect x="455.3" y="299.3" width="0.9" height="1.3" fill="#6a6a6a"/>
<rect x="465.0" y="299.3" width="0.9" height="1.3" fill="#6a6a6a"/>
<rect x="474.6" y="299.3" width="0.9" height="1.3" fill="#6a6a6a"/>
<text x="484.6" y="303.2" font-family="Liberation Sans" font-size="8" fill="#555" text-anchor="middle">3</text>
<rect x="493.8" y="299.3" width="0.9" height="1.3" fill="#6a6a6a"/>
<rect x="503.5" y="299.3" width="0.9" height="1.3" fill="#6a6a6a"/>
<rect x="513.1" y="299.3" width="0.9" height="1.3" fill="#6a6a6a"/>
<rect x="522.7" y="297.3" width="0.9" height="5" fill="#6a6a6a"/>
<rect x="532.3" y="299.3" width="0.9" height="1.3" fill="#6a6a6a"/>
<rect x="542.0" y="299.3" width="0.9" height="1.3" fill="#6a6a6a"/>
<rect x="551.6" y="299.3" width="0.9" height="1.3" fill="#6a6a6a"/>
<text x="561.6" y="303.2" font-family="Liberation Sans" font-size="8" fill="#555" text-anchor="middle">4</text>
<rect x="570.8" y="299.3" width="0.9" height="1.3" fill="#6a6a6a"/>
<rect x="580.5" y="299.3" width="0.9" height="1.3" fill="#6a6a6a"/>
<rect x="590.1" y="299.3" width="0.9" height="1.3" fill="#6a6a6a"/>
<rect x="599.7" y="297.3" width="0.9" height="5" fill="#6a6a6a"/>
<rect x="609.3" y="299.3" width="0.9" height="1.3" fill="#6a6a6a"/>
<rect x="619.0" y="299.3" width="0.9" height="1.3" fill="#6a6a6a"/>
<rect x="628.6" y="299.3" width="0.9" height="1.3" fill="#6a6a6a"/>
<text x="638.6" y="303.2" font-family="Liberation Sans" font-size="8" fill="#555" text-anchor="middle">5</text>
<rect x="647.8" y="299.3" width="0.9" height="1.3" fill="#6a6a6a"/>
<rect x="657.5" y="299.3" width="0.9" height="1.3" fill="#6a6a6a"/>
<rect x="667.1" y="299.3" width="0.9" height="1.3" fill="#6a6a6a"/>
<rect x="676.7" y="297.3" width="0.9" height="5" fill="#6a6a6a"/>
<rect x="686.3" y="299.3" width="0.9" height="1.3" fill="#6a6a6a"/>
<rect x="696.0" y="299.3" width="0.9" height="1.3" fill="#6a6a6a"/>
<rect x="705.6" y="299.3" width="0.9" height="1.3" fill="#6a6a6a"/>
<rect x="715.1" y="297.3" width="1" height="5" fill="#6a6a6a"/>
<rect x="724.8" y="299.3" width="0.9" height="1.3" fill="#6a6a6a"/>
<rect x="734.5" y="299.3" width="0.9" height="1.3" fill="#6a6a6a"/>
<rect x="744.1" y="299.3" width="0.9" height="1.3" fill="#6a6a6a"/>
<rect x="753.7" y="297.3" width="0.9" height="5" fill="#6a6a6a"/>
<rect x="763.3" y="299.3" width="0.9" height="1.3" fill="#6a6a6a"/>
<rect x="773.0" y="299.3" width="0.9" height="1.3" fill="#6a6a6a"/>
<rect x="782.6" y="299.3" width="0.9" height="1.3" fill="#6a6a6a"/>
<rect x="792.1" y="297.3" width="1" height="5" fill="#6a6a6a"/>
<path d="M249.5 293.3 H258 V294.5 L253.8 299.6 L249.5 294.5Z M249.5 305 L253.8 300.4 L258 305" fill="#f8f8f8" stroke="#777" stroke-width="0.9"/>
<rect x="249.5" y="303.2" width="8.5" height="5" fill="#f8f8f8" stroke="#777" stroke-width="0.9"/>
<path d="M703.3 305 V302.5 L707.4 299.6 L711.5 302.5 V305Z" fill="#f8f8f8" stroke="#666" stroke-width="0.9"/>
<path d="M112.5 297.8 V301.8 H117" fill="none" stroke="#707070" stroke-width="1.3"/>
<rect x="122.8" y="292.5" width="0.8" height="16" fill="#e2e2e4"/>
<rect x="107" y="308.6" width="16.3" height="578.4" fill="#f0eff2"/>
<rect x="109.5" y="377" width="9.5" height="510" fill="#fbfbfb"/>
<rect x="122.6" y="308.6" width="0.8" height="578.4" fill="#e0e0e2"/>
<rect x="114.5" y="309.2" width="1.4" height="0.9" fill="#6a6a6a"/>
<rect x="114.5" y="318.9" width="1.4" height="0.9" fill="#6a6a6a"/>
<rect x="114.5" y="328.5" width="1.4" height="0.9" fill="#6a6a6a"/>
<rect x="113" y="338.1" width="5" height="0.9" fill="#6a6a6a"/>
<rect x="114.5" y="347.7" width="1.4" height="0.9" fill="#6a6a6a"/>
<rect x="114.5" y="357.4" width="1.4" height="0.9" fill="#6a6a6a"/>
<rect x="114.5" y="367.0" width="1.4" height="0.9" fill="#6a6a6a"/>
<rect x="114.5" y="386.2" width="1.4" height="0.9" fill="#6a6a6a"/>
<rect x="114.5" y="395.9" width="1.4" height="0.9" fill="#6a6a6a"/>
<rect x="114.5" y="405.5" width="1.4" height="0.9" fill="#6a6a6a"/>
<rect x="113" y="415.1" width="5" height="0.9" fill="#6a6a6a"/>
<rect x="114.5" y="424.7" width="1.4" height="0.9" fill="#6a6a6a"/>
<rect x="114.5" y="434.4" width="1.4" height="0.9" fill="#6a6a6a"/>
<rect x="114.5" y="444.0" width="1.4" height="0.9" fill="#6a6a6a"/>
<text x="0" y="0" transform="translate(117.5,454.0) rotate(-90)" font-family="Liberation Sans" font-size="7.5" fill="#666" text-anchor="middle">1</text>
<rect x="114.5" y="463.2" width="1.4" height="0.9" fill="#6a6a6a"/>
<rect x="114.5" y="472.9" width="1.4" height="0.9" fill="#6a6a6a"/>
<rect x="114.5" y="482.5" width="1.4" height="0.9" fill="#6a6a6a"/>
<rect x="113" y="492.1" width="5" height="0.9" fill="#6a6a6a"/>
<rect x="114.5" y="501.7" width="1.4" height="0.9" fill="#6a6a6a"/>
<rect x="114.5" y="511.4" width="1.4" height="0.9" fill="#6a6a6a"/>
<rect x="114.5" y="521.0" width="1.4" height="0.9" fill="#6a6a6a"/>
<text x="0" y="0" transform="translate(117.5,531.0) rotate(-90)" font-family="Liberation Sans" font-size="7.5" fill="#666" text-anchor="middle">2</text>
<rect x="114.5" y="540.2" width="1.4" height="0.9" fill="#6a6a6a"/>
<rect x="114.5" y="549.9" width="1.4" height="0.9" fill="#6a6a6a"/>
<rect x="114.5" y="559.5" width="1.4" height="0.9" fill="#6a6a6a"/>
<rect x="113" y="569.1" width="5" height="0.9" fill="#6a6a6a"/>
<rect x="114.5" y="578.7" width="1.4" height="0.9" fill="#6a6a6a"/>
<rect x="114.5" y="588.4" width="1.4" height="0.9" fill="#6a6a6a"/>
<rect x="114.5" y="598.0" width="1.4" height="0.9" fill="#6a6a6a"/>
<text x="0" y="0" transform="translate(117.5,608.0) rotate(-90)" font-family="Liberation Sans" font-size="7.5" fill="#666" text-anchor="middle">3</text>
<rect x="114.5" y="617.2" width="1.4" height="0.9" fill="#6a6a6a"/>
<rect x="114.5" y="626.9" width="1.4" height="0.9" fill="#6a6a6a"/>
<rect x="114.5" y="636.5" width="1.4" height="0.9" fill="#6a6a6a"/>
<rect x="113" y="646.1" width="5" height="0.9" fill="#6a6a6a"/>
<rect x="114.5" y="655.7" width="1.4" height="0.9" fill="#6a6a6a"/>
<rect x="114.5" y="665.4" width="1.4" height="0.9" fill="#6a6a6a"/>
<rect x="114.5" y="675.0" width="1.4" height="0.9" fill="#6a6a6a"/>
<text x="0" y="0" transform="translate(117.5,685.0) rotate(-90)" font-family="Liberation Sans" font-size="7.5" fill="#666" text-anchor="middle">4</text>
<rect x="114.5" y="694.2" width="1.4" height="0.9" fill="#6a6a6a"/>
<rect x="114.5" y="703.9" width="1.4" height="0.9" fill="#6a6a6a"/>
<rect x="114.5" y="713.5" width="1.4" height="0.9" fill="#6a6a6a"/>
<rect x="113" y="723.1" width="5" height="0.9" fill="#6a6a6a"/>
<rect x="114.5" y="732.7" width="1.4" height="0.9" fill="#6a6a6a"/>
<rect x="114.5" y="742.4" width="1.4" height="0.9" fill="#6a6a6a"/>
<rect x="114.5" y="752.0" width="1.4" height="0.9" fill="#6a6a6a"/>
<text x="0" y="0" transform="translate(117.5,762.0) rotate(-90)" font-family="Liberation Sans" font-size="7.5" fill="#666" text-anchor="middle">5</text>
<rect x="114.5" y="771.2" width="1.4" height="0.9" fill="#6a6a6a"/>
<rect x="114.5" y="780.9" width="1.4" height="0.9" fill="#6a6a6a"/>
<rect x="114.5" y="790.5" width="1.4" height="0.9" fill="#6a6a6a"/>
<rect x="113" y="800.1" width="5" height="0.9" fill="#6a6a6a"/>
<rect x="114.5" y="809.7" width="1.4" height="0.9" fill="#6a6a6a"/>
<rect x="114.5" y="819.4" width="1.4" height="0.9" fill="#6a6a6a"/>
<rect x="114.5" y="829.0" width="1.4" height="0.9" fill="#6a6a6a"/>
<text x="0" y="0" transform="translate(117.5,839.0) rotate(-90)" font-family="Liberation Sans" font-size="7.5" fill="#666" text-anchor="middle">6</text>
<rect x="114.5" y="848.2" width="1.4" height="0.9" fill="#6a6a6a"/>
<rect x="114.5" y="857.9" width="1.4" height="0.9" fill="#6a6a6a"/>
<rect x="114.5" y="867.5" width="1.4" height="0.9" fill="#6a6a6a"/>
<rect x="113" y="877.1" width="5" height="0.9" fill="#6a6a6a"/>
<rect x="164.5" y="308.6" width="634" height="578.4" fill="#fff"/>
<rect x="164" y="308.6" width="0.8" height="578.4" fill="#c9c9cb"/><rect x="798.2" y="308.6" width="0.8" height="578.4" fill="#c9c9cb"/>
<rect x="813.7" y="308.6" width="634" height="578.4" fill="#fff"/>
<rect x="813.2" y="308.6" width="0.8" height="578.4" fill="#c9c9cb"/><rect x="1447.2" y="308.6" width="0.8" height="578.4" fill="#c9c9cb"/>
<rect x="261" y="717" width="440" height="1" fill="#3a3a3a"/>
<rect x="261" y="734" width="440" height="1" fill="#3a3a3a"/>
<rect x="261" y="761" width="440" height="1" fill="#3a3a3a"/>
<rect x="261" y="784" width="440" height="1" fill="#3a3a3a"/>
<rect x="261" y="807" width="440" height="1" fill="#3a3a3a"/>
<rect x="261" y="717" width="1" height="91" fill="#3a3a3a"/>
<rect x="349" y="717" width="1" height="91" fill="#3a3a3a"/>
<rect x="633" y="717" width="1" height="91" fill="#3a3a3a"/>
<rect x="700" y="717" width="1" height="91" fill="#3a3a3a"/>
<rect x="260" y="854" width="442" height="1" fill="#222"/>
<rect x="260" y="872" width="442" height="1" fill="#222"/>
<rect x="260" y="854" width="1" height="33" fill="#222"/>
<rect x="345" y="854" width="1" height="33" fill="#222"/>
<rect x="701" y="854" width="1" height="33" fill="#222"/>
<rect x="906" y="377" width="449" height="1" fill="#3a3a3a"/>
<rect x="906" y="396" width="449" height="1" fill="#3a3a3a"/>
<rect x="906" y="418" width="449" height="1" fill="#3a3a3a"/>
<rect x="906" y="377" width="1" height="42" fill="#3a3a3a"/>
<rect x="1006" y="377" width="1" height="42" fill="#3a3a3a"/>
<rect x="1354" y="377" width="1" height="42" fill="#3a3a3a"/>
<rect x="903" y="466" width="455" height="1" fill="#3a3a3a"/>
<rect x="903" y="483" width="455" height="1" fill="#3a3a3a"/>
<rect x="903" y="510" width="455" height="1" fill="#3a3a3a"/>
<rect x="903" y="537" width="455" height="1" fill="#3a3a3a"/>
<rect x="903" y="563" width="455" height="1" fill="#3a3a3a"/>
<rect x="903" y="466" width="1" height="98" fill="#3a3a3a"/>
<rect x="961" y="466" width="1" height="98" fill="#3a3a3a"/>
<rect x="1256" y="466" width="1" height="98" fill="#3a3a3a"/>
<rect x="1357" y="466" width="1" height="98" fill="#3a3a3a"/>
<rect x="906" y="603" width="449" height="1" fill="#3a3a3a"/>
<rect x="906" y="621" width="449" height="1" fill="#3a3a3a"/>
<rect x="906" y="668" width="449" height="1" fill="#3a3a3a"/>
<rect x="906" y="714" width="449" height="1" fill="#3a3a3a"/>
<rect x="906" y="761" width="449" height="1" fill="#3a3a3a"/>
<rect x="906" y="821" width="449" height="1" fill="#3a3a3a"/>
<rect x="906" y="603" width="1" height="219" fill="#3a3a3a"/>
<rect x="962" y="603" width="1" height="219" fill="#3a3a3a"/>
<rect x="1181" y="603" width="1" height="219" fill="#3a3a3a"/>
<rect x="1354" y="603" width="1" height="219" fill="#3a3a3a"/>
<rect x="904" y="868" width="452" height="1" fill="#3a3a3a"/>
<rect x="904" y="886" width="452" height="1" fill="#3a3a3a"/>
<rect x="904" y="868" width="1" height="19" fill="#3a3a3a"/>
<rect x="962" y="868" width="1" height="19" fill="#3a3a3a"/>
<rect x="1254" y="868" width="1" height="19" fill="#3a3a3a"/>
<rect x="1355" y="868" width="1" height="19" fill="#3a3a3a"/>
<path d="M967.5 344.5 L967.5 356 L970.3 353.3 L972.3 357.5 L973.8 356.8 L971.9 352.7 L975.6 352.6Z" fill="#fff" stroke="#333" stroke-width="0.8"/>
</svg>
<div class="t" style="left:141.2px;top:227.17px;font-family:'Liberation Sans';font-size:8.3px;color:#bcbcbe;">AutoSave</div>
<div class="t" style="left:198.3px;top:227.02px;font-family:'Liberation Sans';font-size:8.6px;color:#bdbdbf;">Off</div>
<div class="t" style="left:320.5px;top:227.02px;font-family:'Liberation Sans';font-size:8.6px;color:#bdbdbf;letter-spacing:-0.22px">CURRICULUM&nbsp; VITAE SHORT -Bahasa-mei2024 (1)&nbsp; •&nbsp; Saved to this PC</div>
<div class="t" style="left:705.8px;top:226.34px;font-family:'Liberation Sans';font-size:9.4px;color:#b3b3b5;">Search</div>
<div class="t" style="left:1374.6px;top:227.10px;font-family:'Liberation Sans';font-size:8.5px;color:#f3e9e6;">LI</div>
<div class="t" style="left:122.0px;top:254.59px;font-family:'Liberation Sans';font-size:9.7px;color:#2f2f2f;letter-spacing:-0.15px">File</div>
<div class="t" style="left:155.8px;top:254.59px;font-family:'Liberation Sans';font-size:9.7px;color:#2f2f2f;letter-spacing:-0.15px">Home</div>
<div class="t" style="left:196.2px;top:254.59px;font-family:'Liberation Sans';font-size:9.7px;color:#2f2f2f;letter-spacing:-0.15px">Insert</div>
<div class="t" style="left:235.0px;top:254.59px;font-family:'Liberation Sans';font-size:9.7px;color:#2f2f2f;letter-spacing:-0.15px">Draw</div>
<div class="t" style="left:270.9px;top:254.59px;font-family:'Liberation Sans';font-size:9.7px;color:#2f2f2f;letter-spacing:-0.15px">Design</div>
<div class="t" style="left:315.4px;top:254.59px;font-family:'Liberation Sans';font-size:9.7px;color:#2f2f2f;letter-spacing:-0.15px">Layout</div>
<div class="t" style="left:358.3px;top:254.59px;font-family:'Liberation Sans';font-size:9.7px;color:#2f2f2f;letter-spacing:-0.15px">References</div>
<div class="t" style="left:419.0px;top:254.59px;font-family:'Liberation Sans';font-size:9.7px;color:#2f2f2f;letter-spacing:-0.15px">Mailings</div>
<div class="t" style="left:470.0px;top:254.59px;font-family:'Liberation Sans';font-size:9.7px;color:#2f2f2f;letter-spacing:-0.15px">Review</div>
<div class="t" style="left:513.0px;top:254.59px;font-family:'Liberation Sans';font-size:9.7px;color:#2f2f2f;letter-spacing:-0.15px">View</div>
<div class="t" style="left:547.6px;top:254.59px;font-family:'Liberation Sans';font-size:9.7px;color:#2f2f2f;letter-spacing:-0.15px">Help</div>
<div class="t" style="left:582.3px;top:254.59px;font-family:'Liberation Sans';font-size:9.7px;color:#2f2f2f;letter-spacing:-0.15px">Acrobat</div>
<div class="t" style="left:1318.8px;top:254.93px;font-family:'Liberation Sans';font-size:9.3px;color:#2a2a2a;">Comments</div>
<div class="t" style="left:1392.9px;top:254.84px;font-family:'Liberation Sans';font-size:9.4px;color:#2a2a2a;">Editing</div>
<div class="t" style="left:1455.0px;top:255.10px;font-family:'Liberation Sans';font-size:9.1px;color:#ffffff;">Share</div>
<div class="t" style="left:138.7px;top:277.22px;font-family:'Liberation Sans';font-size:8.6px;color:#2a2a2a;letter-spacing:-0.2px;-webkit-text-stroke:0.15px #2a2a2a">MISSING PROOFING TOOLS</div>
<div class="t" style="left:257.2px;top:277.22px;font-family:'Liberation Sans';font-size:8.6px;color:#2a2a2a;text-decoration:underline;letter-spacing:0.05px">Text in Indonesian is not being checked. Do you want to download proofing tools and future updates?</div>
<div class="t" style="left:661.5px;top:277.22px;font-family:'Liberation Sans';font-size:8.6px;color:#2a2a2a;">Download</div>
<div class="t" style="left:721.5px;top:277.22px;font-family:'Liberation Sans';font-size:8.6px;color:#2a2a2a;">Don't show again</div>
<div class="t" style="left:397.0px;top:404.20px;font-family:'Liberation Serif';font-size:13.85px;font-weight:bold;color:#1a1a1a;">DAFTAR RIWAYAT HIDUP</div>
<div class="t" style="left:255.0px;top:449.35px;font-family:'Liberation Serif';font-size:12px;font-weight:bold;color:#1a1a1a;">IDENTITAS DIRI</div>
<div class="t" style="left:273.2px;top:477.83px;font-family:'Liberation Serif';font-size:11.9px;color:#1a1a1a;transform:translateX(-100%);">1</div>
<div class="t" style="left:282.0px;top:477.83px;font-family:'Liberation Serif';font-size:11.9px;color:#1a1a1a;">Nama Lengkap (dengan gelar)</div>
<div class="t" style="left:440.8px;top:477.83px;font-family:'Liberation Serif';font-size:11.9px;color:#1a1a1a;">:</div>
<div class="t" style="left:450.7px;top:477.83px;font-family:'Liberation Serif';font-size:11.9px;color:#1a1a1a;">Prof. Faisal, SE, M.Si, Ph.D, CMA, CRP, CERG</div>
<div class="t" style="left:273.2px;top:498.43px;font-family:'Liberation Serif';font-size:11.9px;color:#1a1a1a;transform:translateX(-100%);">2</div>
<div class="t" style="left:282.0px;top:498.43px;font-family:'Liberation Serif';font-size:11.9px;color:#1a1a1a;">Jenis Kelamin</div>
<div class="t" style="left:438.2px;top:498.43px;font-family:'Liberation Serif';font-size:11.9px;color:#1a1a1a;">:</div>
<div class="t" style="left:450.7px;top:498.43px;font-family:'Liberation Serif';font-size:11.9px;color:#1a1a1a;">Pria</div>
<div class="t" style="left:273.2px;top:517.33px;font-family:'Liberation Serif';font-size:11.9px;color:#1a1a1a;transform:translateX(-100%);">3</div>
<div class="t" style="left:282.0px;top:517.33px;font-family:'Liberation Serif';font-size:11.9px;color:#1a1a1a;">Jabatan Fungsional/Gol</div>
<div class="t" style="left:438.2px;top:517.33px;font-family:'Liberation Serif';font-size:11.9px;color:#1a1a1a;">:</div>
<div class="t" style="left:450.7px;top:517.33px;font-family:'Liberation Serif';font-size:11.9px;color:#1a1a1a;">Guru Besar/IVd</div>
<div class="t" style="left:273.2px;top:537.53px;font-family:'Liberation Serif';font-size:11.9px;color:#1a1a1a;transform:translateX(-100%);">4</div>
<div class="t" style="left:282.0px;top:537.53px;font-family:'Liberation Serif';font-size:11.9px;color:#1a1a1a;">NIP/NIK</div>
<div class="t" style="left:438.2px;top:537.53px;font-family:'Liberation Serif';font-size:11.9px;color:#1a1a1a;">:</div>
<div class="t" style="left:450.7px;top:537.53px;font-family:'Liberation Serif';font-size:11.9px;color:#1a1a1a;">197109042001121001</div>
<div class="t" style="left:273.2px;top:555.33px;font-family:'Liberation Serif';font-size:11.9px;color:#1a1a1a;transform:translateX(-100%);">5</div>
<div class="t" style="left:282.0px;top:555.33px;font-family:'Liberation Serif';font-size:11.9px;color:#1a1a1a;">NIDN</div>
<div class="t" style="left:438.2px;top:555.33px;font-family:'Liberation Serif';font-size:11.9px;color:#1a1a1a;">:</div>
<div class="t" style="left:450.7px;top:555.33px;font-family:'Liberation Serif';font-size:11.9px;color:#1a1a1a;">0004097101</div>
<div class="t" style="left:273.2px;top:571.23px;font-family:'Liberation Serif';font-size:11.9px;color:#1a1a1a;transform:translateX(-100%);">6</div>
<div class="t" style="left:282.0px;top:571.23px;font-family:'Liberation Serif';font-size:11.9px;color:#1a1a1a;">Tempat dan Tanggal Lahir</div>
<div class="t" style="left:438.2px;top:571.23px;font-family:'Liberation Serif';font-size:11.9px;color:#1a1a1a;">:</div>
<div class="t" style="left:450.7px;top:571.23px;font-family:'Liberation Serif';font-size:11.9px;color:#1a1a1a;">Singkawang, 4 September 1971</div>
<div class="t" style="left:273.2px;top:590.03px;font-family:'Liberation Serif';font-size:11.9px;color:#1a1a1a;transform:translateX(-100%);">7</div>
<div class="t" style="left:282.0px;top:590.03px;font-family:'Liberation Serif';font-size:11.9px;color:#1a1a1a;">E-mail</div>
<div class="t" style="left:438.2px;top:590.03px;font-family:'Liberation Serif';font-size:11.9px;color:#1a1a1a;">:</div>
<div class="t" style="left:450.7px;top:590.03px;font-family:'Liberation Serif';font-size:11.9px;color:#1a1a1a;">fe_faisal@yahoo.co.id/faisal@lecturer.undip.ac.id</div>
<div class="t" style="left:273.2px;top:608.63px;font-family:'Liberation Serif';font-size:11.9px;color:#1a1a1a;transform:translateX(-100%);">8</div>
<div class="t" style="left:282.0px;top:608.63px;font-family:'Liberation Serif';font-size:11.9px;color:#1a1a1a;">Nomor Telepon/HP</div>
<div class="t" style="left:438.2px;top:608.63px;font-family:'Liberation Serif';font-size:11.9px;color:#1a1a1a;">:</div>
<div class="t" style="left:450.7px;top:608.63px;font-family:'Liberation Serif';font-size:11.9px;color:#1a1a1a;">024-7464112/08112779015</div>
<div class="t" style="left:273.2px;top:628.43px;font-family:'Liberation Serif';font-size:11.9px;color:#1a1a1a;transform:translateX(-100%);">9</div>
<div class="t" style="left:282.0px;top:628.43px;font-family:'Liberation Serif';font-size:11.9px;color:#1a1a1a;">Alamat Rumah</div>
<div class="t" style="left:438.2px;top:628.43px;font-family:'Liberation Serif';font-size:11.9px;color:#1a1a1a;">:</div>
<div class="t" style="left:450.7px;top:628.43px;font-family:'Liberation Serif';font-size:11.9px;color:#1a1a1a;">Jalan Bukit Cemara I No. 14 Bukit Sari, Semarang</div>
<div class="t" style="left:273.2px;top:647.33px;font-family:'Liberation Serif';font-size:11.9px;color:#1a1a1a;transform:translateX(-100%);">9</div>
<div class="t" style="left:282.0px;top:647.33px;font-family:'Liberation Serif';font-size:11.9px;color:#1a1a1a;">Alamat Kantor</div>
<div class="t" style="left:438.2px;top:647.33px;font-family:'Liberation Serif';font-size:11.9px;color:#1a1a1a;">:</div>
<div class="t" style="left:450.7px;top:647.33px;font-family:'Liberation Serif';font-size:11.9px;color:#1a1a1a;">Dekanat FEB Undip, Kampus Tembalang, Semarang</div>
<div class="t" style="left:273.2px;top:667.13px;font-family:'Liberation Serif';font-size:11.9px;color:#1a1a1a;transform:translateX(-100%);">10</div>
<div class="t" style="left:282.0px;top:667.13px;font-family:'Liberation Serif';font-size:11.9px;color:#1a1a1a;">Nomor Telepon Kantor</div>
<div class="t" style="left:438.2px;top:667.13px;font-family:'Liberation Serif';font-size:11.9px;color:#1a1a1a;">:</div>
<div class="t" style="left:450.7px;top:667.13px;font-family:'Liberation Serif';font-size:11.9px;color:#1a1a1a;">024 76486841</div>
<div class="t" style="left:260.0px;top:703.37px;font-family:'Liberation Serif';font-size:11.5px;font-weight:bold;color:#1a1a1a;">PENDIDIKAN FORMAL</div>
<div class="t" style="left:269.4px;top:720.37px;font-family:'Liberation Serif';font-size:11.5px;font-weight:bold;color:#1a1a1a;letter-spacing:0.3px">Jenjang</div>
<div class="t" style="left:471.6px;top:720.37px;font-family:'Liberation Serif';font-size:11.5px;font-weight:bold;color:#1a1a1a;transform:translateX(-50%);letter-spacing:0.3px">Universitas</div>
<div class="t" style="left:670.8px;top:720.37px;font-family:'Liberation Serif';font-size:11.5px;font-weight:bold;color:#1a1a1a;transform:translateX(-50%);letter-spacing:0.3px">Tahun</div>
<div class="t" style="left:308.0px;top:743.63px;font-family:'Liberation Serif';font-size:11.9px;color:#1a1a1a;transform:translateX(-50%);">S3 (PhD)</div>
<div class="t" style="left:355.5px;top:743.63px;font-family:'Liberation Serif';font-size:11.9px;color:#1a1a1a;">School of Accounting, Curtin University, Perth, Australia</div>
<div class="t" style="left:670.5px;top:743.63px;font-family:'Liberation Serif';font-size:11.9px;color:#1a1a1a;transform:translateX(-50%);">2013</div>
<div class="t" style="left:308.0px;top:770.63px;font-family:'Liberation Serif';font-size:11.9px;color:#1a1a1a;transform:translateX(-50%);">S2 (M.Si)</div>
<div class="t" style="left:355.5px;top:770.63px;font-family:'Liberation Serif';font-size:11.9px;color:#1a1a1a;">Magister Sains Akuntansi, Universitas Gadjah Mada</div>
<div class="t" style="left:670.5px;top:770.63px;font-family:'Liberation Serif';font-size:11.9px;color:#1a1a1a;transform:translateX(-50%);">2001</div>
<div class="t" style="left:308.0px;top:794.13px;font-family:'Liberation Serif';font-size:11.9px;color:#1a1a1a;transform:translateX(-50%);">S1 (SE)</div>
<div class="t" style="left:355.5px;top:794.13px;font-family:'Liberation Serif';font-size:11.9px;color:#1a1a1a;">Fakultas Ekonomi, Universitas Tanjungpura</div>
<div class="t" style="left:670.5px;top:794.13px;font-family:'Liberation Serif';font-size:11.9px;color:#1a1a1a;transform:translateX(-50%);">1996</div>
<div class="t" style="left:260.0px;top:836.45px;font-family:'Liberation Serif';font-size:11.4px;font-weight:bold;color:#1a1a1a;">TUGAS TAMBAHAN</div>
<div class="t" style="left:303.0px;top:857.67px;font-family:'Liberation Serif';font-size:11.5px;font-weight:bold;color:#1a1a1a;transform:translateX(-50%);letter-spacing:0.3px">Tahun</div>
<div class="t" style="left:503.0px;top:857.67px;font-family:'Liberation Serif';font-size:11.5px;font-weight:bold;color:#1a1a1a;transform:translateX(-50%);letter-spacing:0.3px">Nama</div>
<div class="t" style="left:301.7px;top:874.93px;font-family:'Liberation Serif';font-size:11.9px;color:#1a1a1a;transform:translateX(-50%);">2024-2029</div>
<div class="t" style="left:351.6px;top:874.93px;font-family:'Liberation Serif';font-size:11.9px;color:#1a1a1a;">Dekan Fakultas Ekonomika dan Bisnis, UNDIP</div>
<div class="t" style="left:920.0px;top:385.83px;font-family:'Liberation Serif';font-size:11.9px;color:#1a1a1a;">2014-2016</div>
<div class="t" style="left:1012.3px;top:385.83px;font-family:'Liberation Serif';font-size:11.9px;color:#1a1a1a;">Komite Manajemen Risiko, PT. Pegadaian (Persero)</div>
<div class="t" style="left:920.0px;top:405.63px;font-family:'Liberation Serif';font-size:11.9px;color:#1a1a1a;">2013-sekarang</div>
<div class="t" style="left:1012.3px;top:405.63px;font-family:'Liberation Serif';font-size:11.9px;color:#1a1a1a;">Asesor BAN-PT</div>
<div class="t" style="left:903.4px;top:441.34px;font-family:'Liberation Serif';font-size:11.3px;font-weight:bold;color:#1a1a1a;">INDEKS PUBLIKASI</div>
<div class="t" style="left:938.0px;top:468.63px;font-family:'Liberation Serif';font-size:11.9px;color:#1a1a1a;transform:translateX(-50%);">No</div>
<div class="t" style="left:1108.7px;top:468.63px;font-family:'Liberation Serif';font-size:11.9px;color:#1a1a1a;transform:translateX(-50%);">Keterangan</div>
<div class="t" style="left:1313.0px;top:468.63px;font-family:'Liberation Serif';font-size:11.9px;color:#1a1a1a;transform:translateX(-50%);">Terindek</div>
<div class="t" style="left:934.0px;top:492.43px;font-family:'Liberation Serif';font-size:11.9px;color:#1a1a1a;transform:translateX(-50%);">1.</div>
<div class="t" style="left:961.6px;top:492.43px;font-family:'Liberation Serif';font-size:11.9px;color:#1a1a1a;">Scopus H Index</div>
<div class="t" style="left:1314.0px;top:492.43px;font-family:'Liberation Serif';font-size:11.9px;color:#1a1a1a;transform:translateX(-50%);">11</div>
<div class="t" style="left:934.0px;top:519.33px;font-family:'Liberation Serif';font-size:11.9px;color:#1a1a1a;transform:translateX(-50%);">2.</div>
<div class="t" style="left:961.6px;top:519.33px;font-family:'Liberation Serif';font-size:11.9px;color:#1a1a1a;">Google Scholar Index (i10 Index)</div>
<div class="t" style="left:1314.0px;top:519.33px;font-family:'Liberation Serif';font-size:11.9px;color:#1a1a1a;transform:translateX(-50%);">20 (30)</div>
<div class="t" style="left:934.0px;top:545.73px;font-family:'Liberation Serif';font-size:11.9px;color:#1a1a1a;transform:translateX(-50%);">3.</div>
<div class="t" style="left:961.6px;top:545.73px;font-family:'Liberation Serif';font-size:11.9px;color:#1a1a1a;">Researchgate Score</div>
<div class="t" style="left:1314.0px;top:545.73px;font-family:'Liberation Serif';font-size:11.9px;color:#1a1a1a;transform:translateX(-50%);">18</div>
<div class="t" style="left:903.4px;top:586.02px;font-family:'Liberation Serif';font-size:11.2px;font-weight:bold;color:#1a1a1a;">SERTIFIKASI PROFESIONAL</div>
<div class="t" style="left:919.0px;top:607.17px;font-family:'Liberation Serif';font-size:11.5px;font-weight:bold;color:#1a1a1a;letter-spacing:0.3px">Tahun</div>
<div class="t" style="left:1047.0px;top:607.17px;font-family:'Liberation Serif';font-size:11.5px;font-weight:bold;color:#1a1a1a;letter-spacing:0.3px">Nama Sertifikasi</div>
<div class="t" style="left:1192.0px;top:607.17px;font-family:'Liberation Serif';font-size:11.5px;font-weight:bold;color:#1a1a1a;letter-spacing:0.3px">Lembaga Pemberi</div>
<div class="t" style="left:936.8px;top:629.03px;font-family:'Liberation Serif';font-size:11.9px;color:#1a1a1a;transform:translateX(-50%);">2016-</div>
<div class="t" style="left:936.8px;top:642.93px;font-family:'Liberation Serif';font-size:11.9px;color:#1a1a1a;transform:translateX(-50%);">sekarang</div>
<div class="t" style="left:963.5px;top:629.03px;font-family:'Liberation Serif';font-size:11.9px;color:#1a1a1a;">Certified Management Accountants (CMA)</div>
<div class="t" style="left:963.5px;top:648.83px;font-family:'Liberation Serif';font-size:11.9px;color:#1a1a1a;">No. MID-030827</div>
<div class="t" style="left:1182.0px;top:628.03px;font-family:'Liberation Serif';font-size:11.9px;color:#1a1a1a;max-width:171px;overflow:hidden">The Institute of Certified</div>
<div class="t" style="left:1182.0px;top:642.03px;font-family:'Liberation Serif';font-size:11.9px;color:#1a1a1a;max-width:171px;overflow:hidden">Management Accountants Australia</div>
<div class="t" style="left:936.8px;top:676.33px;font-family:'Liberation Serif';font-size:11.9px;color:#1a1a1a;transform:translateX(-50%);">2016-</div>
<div class="t" style="left:936.8px;top:690.03px;font-family:'Liberation Serif';font-size:11.9px;color:#1a1a1a;transform:translateX(-50%);">sekarang</div>
<div class="t" style="left:963.5px;top:676.03px;font-family:'Liberation Serif';font-size:11.9px;color:#1a1a1a;">Certified Risk Profesional (CRP)</div>
<div class="t" style="left:963.5px;top:696.03px;font-family:'Liberation Serif';font-size:11.9px;color:#1a1a1a;">No. 66123 2421&nbsp; O00O452 2016</div>
<div class="t" style="left:1182.0px;top:675.03px;font-family:'Liberation Serif';font-size:11.9px;color:#1a1a1a;max-width:171px;overflow:hidden">Badan Nasional Sertifikasi Profesi</div>
<div class="t" style="left:1182.0px;top:689.03px;font-family:'Liberation Serif';font-size:11.9px;color:#1a1a1a;max-width:171px;overflow:hidden">(BNSP)</div>
<div class="t" style="left:936.8px;top:722.63px;font-family:'Liberation Serif';font-size:11.9px;color:#1a1a1a;transform:translateX(-50%);">2016-</div>
<div class="t" style="left:936.8px;top:736.53px;font-family:'Liberation Serif';font-size:11.9px;color:#1a1a1a;transform:translateX(-50%);">sekarang</div>
<div class="t" style="left:963.5px;top:722.63px;font-family:'Liberation Serif';font-size:11.9px;color:#1a1a1a;">Certified Business Analyst (CIBA)</div>
<div class="t" style="left:963.5px;top:743.03px;font-family:'Liberation Serif';font-size:11.9px;color:#1a1a1a;">No. 200600014037</div>
<div class="t" style="left:1182.0px;top:722.03px;font-family:'Liberation Serif';font-size:11.9px;color:#1a1a1a;max-width:171px;overflow:hidden">Academy of Financial &amp;</div>
<div class="t" style="left:1182.0px;top:736.03px;font-family:'Liberation Serif';font-size:11.9px;color:#1a1a1a;max-width:171px;overflow:hidden">Management (AFMA) Australia</div>
<div class="t" style="left:936.8px;top:769.63px;font-family:'Liberation Serif';font-size:11.9px;color:#1a1a1a;transform:translateX(-50%);">2018-</div>
<div class="t" style="left:936.8px;top:783.43px;font-family:'Liberation Serif';font-size:11.9px;color:#1a1a1a;transform:translateX(-50%);">sekarang</div>
<div class="t" style="left:963.5px;top:769.63px;font-family:'Liberation Serif';font-size:11.9px;color:#1a1a1a;">Certified Enterprise Risk Governance</div>
<div class="t" style="left:963.5px;top:783.43px;font-family:'Liberation Serif';font-size:11.9px;color:#1a1a1a;">(CERG)</div>
<div class="t" style="left:963.5px;top:803.33px;font-family:'Liberation Serif';font-size:11.9px;color:#1a1a1a;">No. CERG-31230237</div>
<div class="t" style="left:1182.0px;top:769.03px;font-family:'Liberation Serif';font-size:11.9px;color:#1a1a1a;max-width:171px;overflow:hidden">Enterprise Risk Management</div>
<div class="t" style="left:1182.0px;top:783.03px;font-family:'Liberation Serif';font-size:11.9px;color:#1a1a1a;max-width:171px;overflow:hidden">Academy (ERMA) Asia Pacific</div>
<div class="t" style="left:903.2px;top:850.97px;font-family:'Liberation Serif';font-size:11.5px;font-weight:bold;color:#1a1a1a;">PENGHARGAAN (AWARDS)</div>
<div class="t" style="left:918.0px;top:871.37px;font-family:'Liberation Serif';font-size:11.5px;font-weight:bold;color:#1a1a1a;letter-spacing:0.3px">Tahun</div>
<div class="t" style="left:1046.0px;top:871.37px;font-family:'Liberation Serif';font-size:11.5px;font-weight:bold;color:#1a1a1a;letter-spacing:0.3px">Nama Penghargaan</div>
<div class="t" style="left:1266.0px;top:871.37px;font-family:'Liberation Serif';font-size:11.5px;font-weight:bold;color:#1a1a1a;letter-spacing:0.3px">Pemberi</div>
<!--/WORD-->
</body></html>
